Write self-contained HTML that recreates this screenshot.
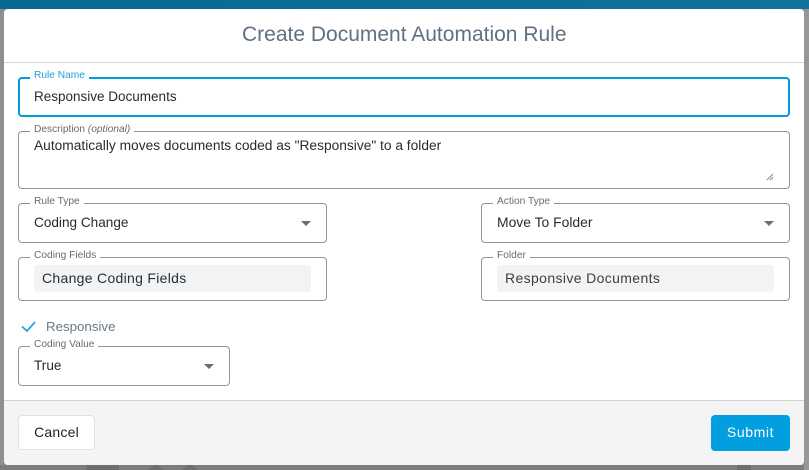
<!DOCTYPE html>
<html><head><meta charset="utf-8"><style>
html,body{margin:0;padding:0;width:809px;height:470px;overflow:hidden;background:#8e8e8e;font-family:"Liberation Sans",sans-serif}
.a{position:absolute;white-space:nowrap}
.box{position:absolute;box-sizing:border-box;border:1px solid #949494;border-radius:4px;background:#fff}
.lab{position:absolute;white-space:nowrap;background:#fff;padding:0 4px;font-size:10.2px;line-height:12px;color:#6b6b6b;height:12px}
.t{position:absolute;white-space:nowrap;font-size:13.6px;line-height:18px;color:#2b2b2b}
.chip{position:absolute;background:#f3f3f3;border-radius:4px;height:27px}
.arrow{position:absolute;width:0;height:0;border-left:5.5px solid transparent;border-right:5.5px solid transparent;border-top:5px solid #6f6f6f}
</style></head><body>
<div class="a" style="left:0;top:0;width:809px;height:9px;background:linear-gradient(90deg,#066a93,#10739d)"></div>
<div class="a" style="left:0;top:9px;width:4px;height:461px;background:#8f8f8f"></div>
<div class="a" style="left:0;top:465px;width:809px;height:5px;background:#7d7d7d"></div>
<div class="a" style="left:86px;top:465px;width:33px;height:5px;background:#6e6e6e"></div>
<svg class="a" style="left:140px;top:465px" width="60" height="5"><path d="M8 5L14 0H18L24 5ZM42 5L48 0H52L58 5Z" fill="#6e6e6e"/></svg>
<div class="a" style="left:737px;top:465px;width:14px;height:5px;background:#6e6e6e"></div>
<div class="a" style="left:804px;top:9px;width:5px;height:461px;background:#979797"></div>

<div class="a" style="left:4px;top:9px;width:800px;height:456px;background:#fff;border-radius:4px;overflow:hidden">
  <div class="a" style="left:0;top:53px;width:800px;height:1px;background:#d6d6d6"></div>
  <div class="a" style="left:0;top:391px;width:800px;height:65px;background:#f4f4f4;border-top:1px solid #d2d2d2;box-sizing:border-box"></div>
</div>

<div class="a" style="left:242px;top:22px;font-size:21px;line-height:26px;color:#5f7182">Create Document Automation Rule</div>

<div class="box" style="left:18px;top:77px;width:772px;height:40px;border:2px solid #019cdc"></div>
<div class="lab" style="left:30px;top:70px;color:#1da1dc">Rule Name</div>
<div class="t" style="left:34px;top:88px;font-size:13.5px">Responsive Documents</div>

<div class="box" style="left:18px;top:131px;width:772px;height:58px"></div>
<div class="lab" style="left:30px;top:124px">Description <i>(optional)</i></div>
<div class="t" style="left:34px;top:137px;font-size:13.76px">Automatically moves documents coded as "Responsive" to a folder</div>
<svg class="a" style="left:766px;top:173px" width="8" height="8"><path d="M7 1L1 7M7 4L4 7M7 6.500L6.500 7" stroke="#8b8b8b" stroke-width="1" fill="none"/></svg>

<div class="box" style="left:18px;top:203px;width:309px;height:40px"></div>
<div class="lab" style="left:30px;top:196px">Rule Type</div>
<div class="t" style="left:34px;top:214px">Coding Change</div>
<div class="arrow" style="left:301px;top:221px"></div>

<div class="box" style="left:481px;top:203px;width:309px;height:40px"></div>
<div class="lab" style="left:493px;top:196px">Action Type</div>
<div class="t" style="left:497px;top:213px;font-size:13.9px">Move To Folder</div>
<div class="arrow" style="left:764px;top:221px"></div>

<div class="box" style="left:18px;top:257px;width:309px;height:44px"></div>
<div class="lab" style="left:30px;top:250px">Coding Fields</div>
<div class="chip" style="left:34px;top:265px;width:277px"></div>
<div class="t" style="left:42px;top:269px;font-size:14px;letter-spacing:.3px;color:#20303c">Change Coding Fields</div>

<div class="box" style="left:481px;top:257px;width:309px;height:44px"></div>
<div class="lab" style="left:493px;top:250px">Folder</div>
<div class="chip" style="left:497px;top:265px;width:277px"></div>
<div class="t" style="left:505px;top:269px;font-size:14px;letter-spacing:.37px;color:#3a3f44">Responsive Documents</div>

<svg class="a" style="left:20px;top:318px" width="18" height="16"><path d="M2 8.500L7 13L15 4" stroke="#1ea7e4" stroke-width="1.700" fill="none"/></svg>
<div class="t" style="left:46px;top:318px;font-size:13.3px;color:#697885">Responsive</div>

<div class="box" style="left:18px;top:346px;width:212px;height:40px"></div>
<div class="lab" style="left:30px;top:339px">Coding Value</div>
<div class="t" style="left:34px;top:357px">True</div>
<div class="arrow" style="left:204px;top:364px"></div>

<div class="a" style="left:18px;top:415px;width:77px;height:35px;box-sizing:border-box;background:#fff;border:1px solid #e2e2e2;border-radius:4px;text-align:center;font-size:14px;letter-spacing:.2px;line-height:33px;color:#222">Cancel</div>
<div class="a" style="left:711px;top:415px;width:79px;height:36px;background:#019ee0;border-radius:4px;text-align:center;font-size:14px;letter-spacing:.6px;line-height:35px;color:#fff">Submit</div>
</body></html>
